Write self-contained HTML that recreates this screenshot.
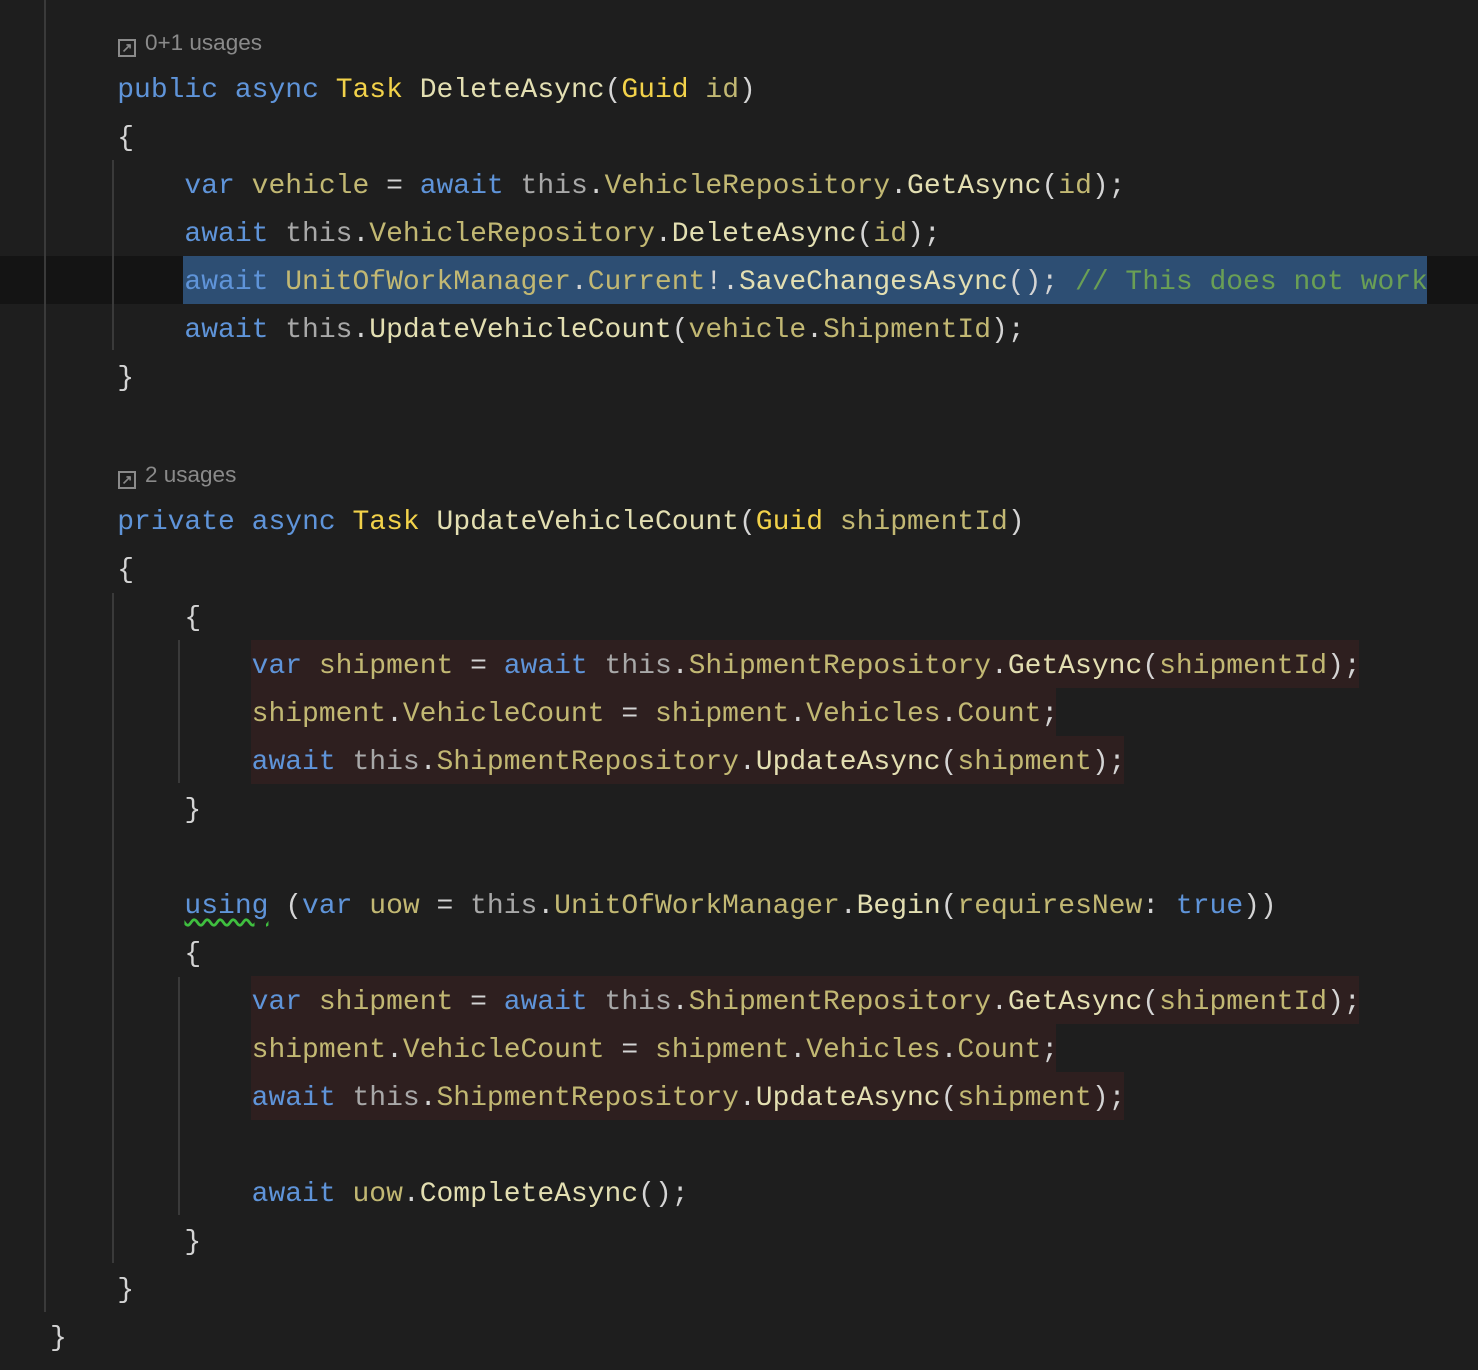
<!DOCTYPE html>
<html><head><meta charset="utf-8"><style>
body{margin:0;width:1478px;height:1370px;background:#1e1e1e;overflow:hidden;position:relative;font-family:"Liberation Mono",monospace;}
.l{position:absolute;left:50px;height:48px;line-height:48px;padding-top:3px;font-size:28px;white-space:pre;color:#d4d4d4;}
.k{color:#5f94d9}.t{color:#f2d24a}.m{color:#e3dfb2}.v{color:#c2b873}.th{color:#a8a8a8}.c{color:#6a9f55}.p{color:#d4d4d4}
.h{position:absolute;left:118px;font-family:"Liberation Sans",sans-serif;font-size:22.5px;color:#8a8a8a;height:30px;line-height:30px}
.h i{display:inline-block;width:14px;height:14px;border:2px solid #8a8a8a;vertical-align:-2px;margin-right:9px;position:relative;font-style:normal;font-size:13px;line-height:14px;text-align:center;font-weight:bold}
.g{position:absolute;width:2px;background:#3a3a3a}
.bg{position:absolute;height:48px;background:#2e1f1f}
</style></head><body>
<div style="position:absolute;left:0;top:256px;width:1478px;height:48px;background:#141414"></div>
<div style="position:absolute;left:183px;top:256px;width:1244px;height:48px;background:#2d4e73"></div>
<div class="bg" style="left:251px;top:640px;width:1108px"></div>
<div class="bg" style="left:251px;top:688px;width:805px"></div>
<div class="bg" style="left:251px;top:736px;width:873px"></div>
<div class="bg" style="left:251px;top:976px;width:1108px"></div>
<div class="bg" style="left:251px;top:1024px;width:805px"></div>
<div class="bg" style="left:251px;top:1072px;width:873px"></div>
<div class="g" style="left:44px;top:0;height:1312px"></div>
<div class="g" style="left:112px;top:160px;height:190px"></div>
<div class="g" style="left:112px;top:593px;height:670px"></div>
<div class="g" style="left:178px;top:640px;height:143px"></div>
<div class="g" style="left:178px;top:977px;height:238px"></div>

<div class="h" style="top:28px"><i>↗</i>0+1 usages</div>
<div class="l" style="top:64px">    <span class="k">public</span> <span class="k">async</span> <span class="t">Task</span> <span class="m">DeleteAsync</span>(<span class="t">Guid</span> <span class="v">id</span>)</div>
<div class="l" style="top:112px">    {</div>
<div class="l" style="top:160px">        <span class="k">var</span> <span class="v">vehicle</span> = <span class="k">await</span> <span class="th">this</span>.<span class="v">VehicleRepository</span>.<span class="m">GetAsync</span>(<span class="v">id</span>);</div>
<div class="l" style="top:208px">        <span class="k">await</span> <span class="th">this</span>.<span class="v">VehicleRepository</span>.<span class="m">DeleteAsync</span>(<span class="v">id</span>);</div>
<div class="l" style="top:256px">        <span class="k">await</span> <span class="v">UnitOfWorkManager</span>.<span class="v">Current</span>!.<span class="m">SaveChangesAsync</span>(); <span class="c">// This does not work</span></div>
<div class="l" style="top:304px">        <span class="k">await</span> <span class="th">this</span>.<span class="m">UpdateVehicleCount</span>(<span class="v">vehicle</span>.<span class="v">ShipmentId</span>);</div>
<div class="l" style="top:352px">    }</div>
<div class="h" style="top:460px"><i>↗</i>2 usages</div>
<div class="l" style="top:496px">    <span class="k">private</span> <span class="k">async</span> <span class="t">Task</span> <span class="m">UpdateVehicleCount</span>(<span class="t">Guid</span> <span class="v">shipmentId</span>)</div>
<div class="l" style="top:544px">    {</div>
<div class="l" style="top:592px">        {</div>
<div class="l" style="top:640px">            <span class="k">var</span> <span class="v">shipment</span> = <span class="k">await</span> <span class="th">this</span>.<span class="v">ShipmentRepository</span>.<span class="m">GetAsync</span>(<span class="v">shipmentId</span>);</div>
<div class="l" style="top:688px">            <span class="v">shipment</span>.<span class="v">VehicleCount</span> = <span class="v">shipment</span>.<span class="v">Vehicles</span>.<span class="v">Count</span>;</div>
<div class="l" style="top:736px">            <span class="k">await</span> <span class="th">this</span>.<span class="v">ShipmentRepository</span>.<span class="m">UpdateAsync</span>(<span class="v">shipment</span>);</div>
<div class="l" style="top:784px">        }</div>
<div class="l" style="top:880px">        <span class="k" style="text-decoration:underline wavy #3fbf3f;text-underline-offset:5px">using</span> (<span class="k">var</span> <span class="v">uow</span> = <span class="th">this</span>.<span class="v">UnitOfWorkManager</span>.<span class="m">Begin</span>(<span class="v">requiresNew</span>: <span class="k">true</span>))</div>
<div class="l" style="top:928px">        {</div>
<div class="l" style="top:976px">            <span class="k">var</span> <span class="v">shipment</span> = <span class="k">await</span> <span class="th">this</span>.<span class="v">ShipmentRepository</span>.<span class="m">GetAsync</span>(<span class="v">shipmentId</span>);</div>
<div class="l" style="top:1024px">            <span class="v">shipment</span>.<span class="v">VehicleCount</span> = <span class="v">shipment</span>.<span class="v">Vehicles</span>.<span class="v">Count</span>;</div>
<div class="l" style="top:1072px">            <span class="k">await</span> <span class="th">this</span>.<span class="v">ShipmentRepository</span>.<span class="m">UpdateAsync</span>(<span class="v">shipment</span>);</div>
<div class="l" style="top:1168px">            <span class="k">await</span> <span class="v">uow</span>.<span class="m">CompleteAsync</span>();</div>
<div class="l" style="top:1216px">        }</div>
<div class="l" style="top:1264px">    }</div>
<div class="l" style="top:1312px">}</div>
</body></html>
